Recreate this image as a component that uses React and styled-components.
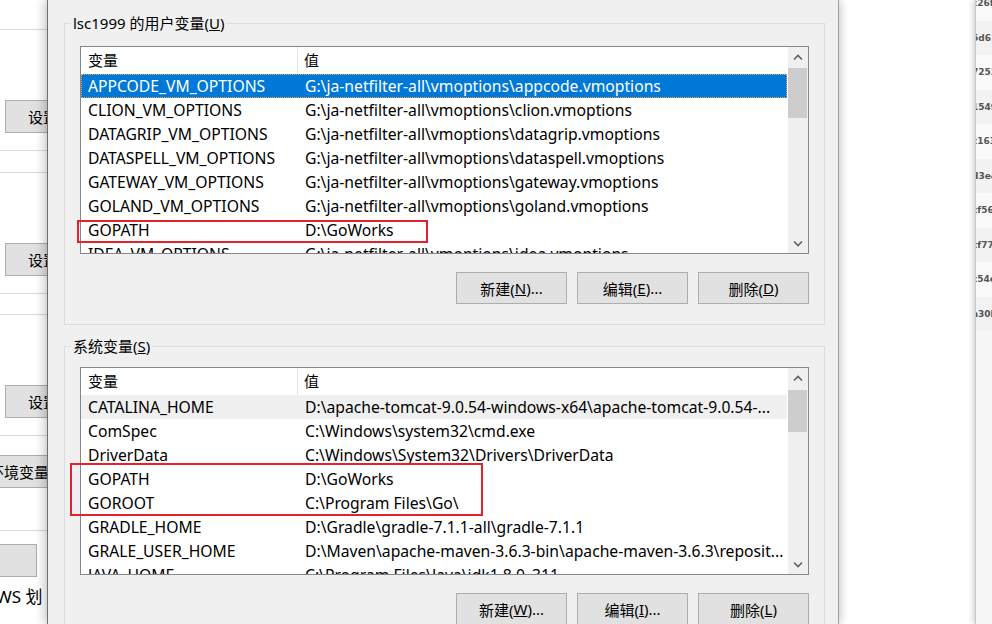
import styled, { createGlobalStyle } from 'styled-components'

const GlobalStyle = createGlobalStyle`
  html, body {
    margin: 0;
    padding: 0;
    background: #ffffff;
  }
  body {
    font-family: "Noto Sans", "Noto Sans CJK SC", sans-serif;
    font-size: 15px;
    color: #000;
  }
  #root {
    width: 992px;
    height: 624px;
    overflow: hidden;
  }
`

const userVars = [
  ['APPCODE_VM_OPTIONS', 'G:\\ja-netfilter-all\\vmoptions\\appcode.vmoptions'],
  ['CLION_VM_OPTIONS', 'G:\\ja-netfilter-all\\vmoptions\\clion.vmoptions'],
  ['DATAGRIP_VM_OPTIONS', 'G:\\ja-netfilter-all\\vmoptions\\datagrip.vmoptions'],
  ['DATASPELL_VM_OPTIONS', 'G:\\ja-netfilter-all\\vmoptions\\dataspell.vmoptions'],
  ['GATEWAY_VM_OPTIONS', 'G:\\ja-netfilter-all\\vmoptions\\gateway.vmoptions'],
  ['GOLAND_VM_OPTIONS', 'G:\\ja-netfilter-all\\vmoptions\\goland.vmoptions'],
  ['GOPATH', 'D:\\GoWorks'],
  ['IDEA_VM_OPTIONS', 'G:\\ja-netfilter-all\\vmoptions\\idea.vmoptions'],
]

const systemVars = [
  ['CATALINA_HOME', 'D:\\apache-tomcat-9.0.54-windows-x64\\apache-tomcat-9.0.54-...'],
  ['ComSpec', 'C:\\Windows\\system32\\cmd.exe'],
  ['DriverData', 'C:\\Windows\\System32\\Drivers\\DriverData'],
  ['GOPATH', 'D:\\GoWorks'],
  ['GOROOT', 'C:\\Program Files\\Go\\'],
  ['GRADLE_HOME', 'D:\\Gradle\\gradle-7.1.1-all\\gradle-7.1.1'],
  ['GRALE_USER_HOME', 'D:\\Maven\\apache-maven-3.6.3-bin\\apache-maven-3.6.3\\reposit...'],
  ['JAVA_HOME', 'C:\\Program Files\\Java\\jdk1.8.0_311'],
]

const hexBits = ['c26f', '5d61', '7253', '1549', 'c163', 'd3e4', 'cf56', 'cf77', 'c54e', 'a30b']

function Chevron({ down }) {
  return (
    <svg width="10" height="7" viewBox="0 0 10 7">
      <polyline
        points={down ? '1,1.5 5,5.5 9,1.5' : '1,5.5 5,1.5 9,5.5'}
        fill="none"
        stroke="#606060"
        strokeWidth="1.6"
      />
    </svg>
  )
}

function VarList({ rows, active, mark, gap, thumbTop, thumbHeight }) {
  return (
    <ListBox $gap={gap}>
      <ListMain>
        <ListHeader>
          <HeaderName>变量</HeaderName>
          <HeaderValue>值</HeaderValue>
        </ListHeader>
        <Rows>
          {rows.map(([name, value], i) => (
            <Row key={name} $selected={i === 0} $active={active}>
              <NameCell>{name}</NameCell>
              <ValueCell>{value}</ValueCell>
            </Row>
          ))}
        </Rows>
      </ListMain>
      <ScrollBar>
        <ScrollArrow>
          <Chevron />
        </ScrollArrow>
        <ScrollTrack>
          <ScrollThumb $top={thumbTop} $height={thumbHeight} />
        </ScrollTrack>
        <ScrollArrow>
          <Chevron down />
        </ScrollArrow>
      </ScrollBar>
      <Highlight $left={mark.left} $top={mark.top} $width={mark.width} $height={mark.height} />
    </ListBox>
  )
}

function App() {
  return (
    <>
      <GlobalStyle />
      <Page>
        <BackWindow>
          <BackContent>
            <BackRule $gap={29} />
            <BackButton $gap={70}>设置</BackButton>
            <BackRule $gap={17} />
            <BackRule $gap={21} />
            <BackButton $gap={70}>设置</BackButton>
            <BackRule $gap={17} />
            <BackRule $gap={20} />
            <BackButton $gap={70}>设置</BackButton>
            <BackRule $gap={17} />
            <BackButton $gap={19} $shift={-40} $pad={28}>环境变量</BackButton>
            <BackRule $gap={42} />
            <BackButton $gap={13} $shift={-40} $width={77} />
            <BackText>WS 划</BackText>
          </BackContent>
        </BackWindow>

        <Dialog>
          <GroupBox>
            <Legend>
              lsc1999 的用户变量(<u>U</u>)
            </Legend>
            <VarList
              rows={userVars}
              active
              gap={13}
              thumbTop={1}
              thumbHeight={50}
              mark={{ left: -4, top: 173, width: 351, height: 23 }}
            />
            <ButtonRow>
              <DialogButton>
                新建(<u>N</u>)...
              </DialogButton>
              <DialogButton>
                编辑(<u>E</u>)...
              </DialogButton>
              <DialogButton>
                删除(<u>D</u>)
              </DialogButton>
            </ButtonRow>
          </GroupBox>

          <GroupBox $gap={21}>
            <Legend>
              系统变量(<u>S</u>)
            </Legend>
            <VarList
              rows={systemVars}
              gap={11}
              thumbTop={2}
              thumbHeight={42}
              mark={{ left: -11, top: 95, width: 413, height: 53 }}
            />
            <ButtonRow>
              <DialogButton>
                新建(<u>W</u>)...
              </DialogButton>
              <DialogButton>
                编辑(<u>I</u>)...
              </DialogButton>
              <DialogButton>
                删除(<u>L</u>)
              </DialogButton>
            </ButtonRow>
          </GroupBox>
        </Dialog>

        <Blank />

        <SideWindow>
          <HexList>
            {hexBits.map((bit, i) => (
              <HexRow key={bit} $odd={i % 2 === 1}>
                {bit}
              </HexRow>
            ))}
          </HexList>
        </SideWindow>
      </Page>
    </>
  )
}

export default App

const Page = styled.div`
  display: flex;
  width: 992px;
  height: 624px;
  overflow: hidden;
  background: #ffffff;
`

const BackWindow = styled.div`
  width: 47px;
  flex: none;
  overflow: hidden;
  background: #ffffff;
`

const BackContent = styled.div`
  display: flex;
  flex-direction: column;
  width: 140px;
`

const BackRule = styled.div`
  height: 1px;
  margin-top: ${(p) => p.$gap}px;
  background: #dadada;
`

const BackButton = styled.div`
  box-sizing: border-box;
  height: 33px;
  width: ${(p) => p.$width || 110}px;
  margin-top: ${(p) => p.$gap}px;
  margin-left: ${(p) => (p.$shift === undefined ? 5 : p.$shift)}px;
  padding-left: ${(p) => p.$pad || 22}px;
  display: flex;
  align-items: center;
  background: #e1e1e1;
  border: 1px solid #adadad;
  white-space: nowrap;
`

const BackText = styled.div`
  margin-top: 9px;
  margin-left: -4px;
  line-height: 22px;
  font-size: 17px;
  white-space: nowrap;
`

const Dialog = styled.div`
  position: relative;
  z-index: 1;
  box-sizing: border-box;
  width: 792px;
  flex: none;
  padding: 23px 13px 0 16px;
  background: #f0f0f0;
  border-left: 1px solid #6e6e6e;
  border-right: 1px solid #a0a0a0;
  box-shadow: -3px 0 10px rgba(0, 0, 0, 0.2), 3px 0 8px rgba(0, 0, 0, 0.12);
`

const GroupBox = styled.div`
  margin-top: ${(p) => p.$gap || 0}px;
  padding: 0 15px 20px;
  border: 1px solid #dcdcdc;
`

const Legend = styled.div`
  display: table;
  margin: -11px 0 0 -9px;
  padding: 0 2px;
  height: 20px;
  line-height: 20px;
  background: #f0f0f0;
  white-space: nowrap;
`

const ListBox = styled.div`
  position: relative;
  display: flex;
  height: 208px;
  margin-top: ${(p) => p.$gap}px;
  box-sizing: border-box;
  border: 1px solid #828790;
  background: #ffffff;
  font-size: 15.7px;
`

const ListMain = styled.div`
  flex: 1;
  min-width: 0;
  overflow: hidden;
`

const ListHeader = styled.div`
  display: flex;
  height: 27px;
  font-size: 15px;
`

const HeaderName = styled.div`
  width: 217px;
  padding-left: 7px;
  box-sizing: border-box;
  border-right: 1px solid #e5e5e5;
  line-height: 27px;
`

const HeaderValue = styled.div`
  flex: 1;
  padding-left: 6px;
  line-height: 27px;
`

const Rows = styled.div`
  display: flex;
  flex-direction: column;
`

const Row = styled.div`
  display: flex;
  flex: none;
  height: 24px;
  line-height: 24px;
  white-space: nowrap;
  box-sizing: border-box;
  background: ${(p) => (p.$selected ? (p.$active ? '#0078d7' : '#f0f0f0') : 'transparent')};
  color: ${(p) => (p.$selected && p.$active ? '#ffffff' : '#000000')};
  outline: ${(p) => (p.$selected && p.$active ? '1px dotted #f0a050' : 'none')};
  outline-offset: -1px;
`

const NameCell = styled.div`
  width: 218px;
  flex: none;
  padding-left: 7px;
  box-sizing: border-box;
  overflow: hidden;
`

const ValueCell = styled.div`
  flex: 1;
  min-width: 0;
  padding-left: 6px;
  overflow: hidden;
`

const ScrollBar = styled.div`
  width: 20px;
  flex: none;
  margin-left: 1px;
  display: flex;
  flex-direction: column;
  background: #f0f0f0;
`

const ScrollArrow = styled.div`
  height: 20px;
  flex: none;
  display: flex;
  align-items: center;
  justify-content: center;
`

const ScrollTrack = styled.div`
  flex: 1;
  position: relative;
`

const ScrollThumb = styled.div`
  margin: ${(p) => p.$top}px 1px 0 0;
  height: ${(p) => p.$height}px;
  background: #cdcdcd;
`

const Highlight = styled.div`
  position: absolute;
  left: ${(p) => p.$left}px;
  top: ${(p) => p.$top}px;
  width: ${(p) => p.$width}px;
  height: ${(p) => p.$height}px;
  box-sizing: border-box;
  border: 2px solid #e5222b;
  pointer-events: none;
`

const ButtonRow = styled.div`
  display: flex;
  justify-content: flex-end;
  gap: 10px;
  margin-top: 18px;
`

const DialogButton = styled.div`
  box-sizing: border-box;
  width: 111px;
  height: 32px;
  display: flex;
  align-items: center;
  justify-content: center;
  background: #e1e1e1;
  border: 1px solid #adadad;
  white-space: nowrap;
`

const Blank = styled.div`
  flex: 1;
  background: #ffffff;
`

const SideWindow = styled.div`
  position: relative;
  width: 16px;
  flex: none;
  overflow: hidden;
  background: #f7f7f7;
  border-left: 1px solid #c8c8c8;
  box-shadow: -2px 0 5px rgba(0, 0, 0, 0.18);
`

const HexList = styled.div`
  display: flex;
  flex-direction: column;
  margin-top: -14px;
`

const HexRow = styled.div`
  height: 34.5px;
  flex: none;
  display: flex;
  align-items: center;
  padding-left: 1px;
  margin-left: -5px;
  font-family: "DejaVu Sans", sans-serif;
  font-size: 9px;
  font-weight: bold;
  color: #555555;
  background: ${(p) => (p.$odd ? '#f2f2f2' : '#fafafa')};
  white-space: nowrap;
`
